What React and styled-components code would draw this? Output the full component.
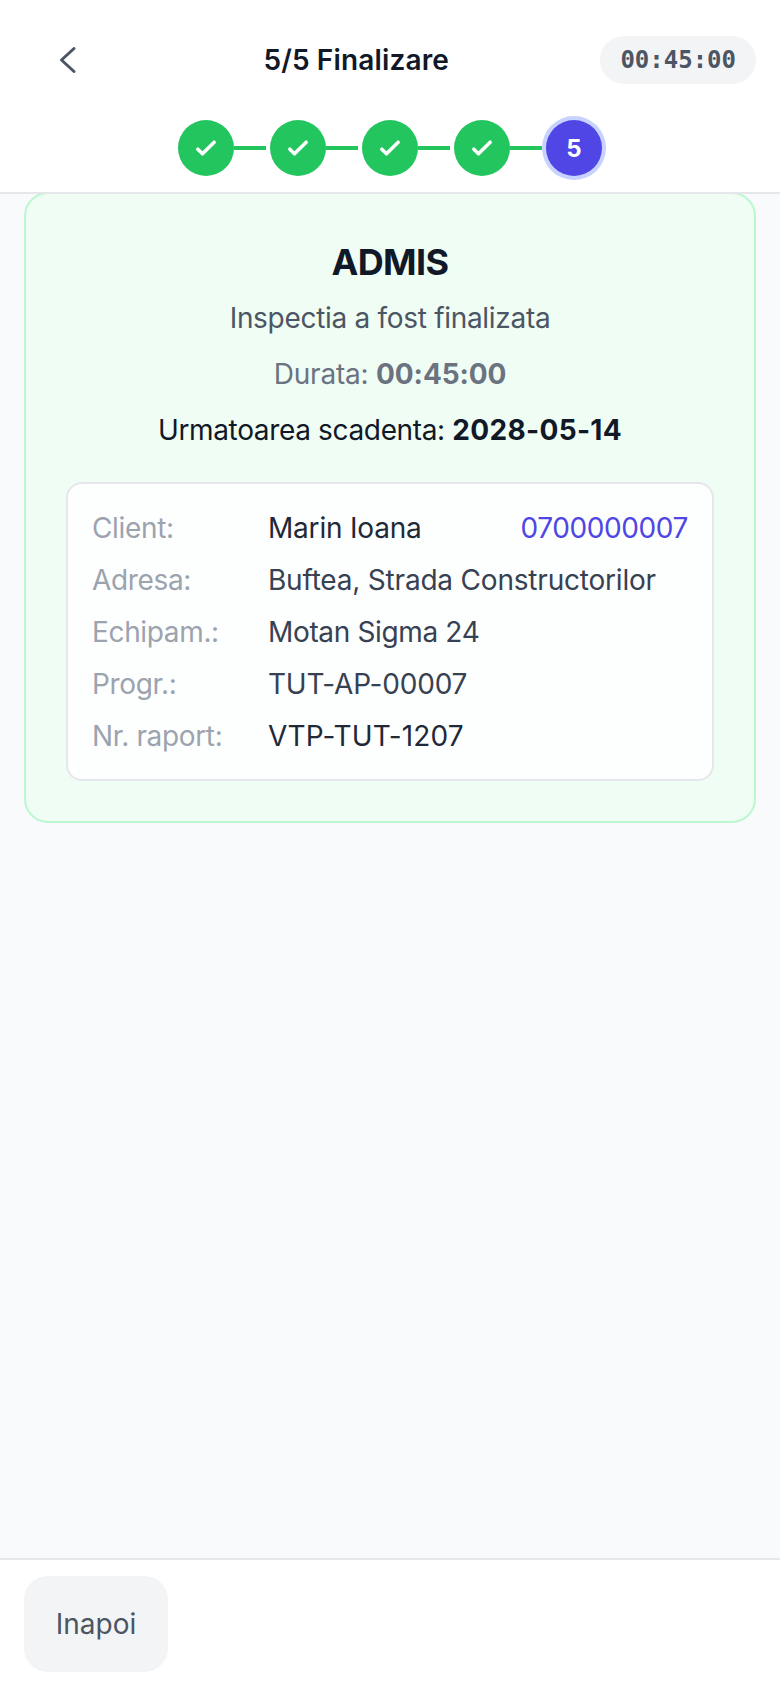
import React from 'react';
import styled, { createGlobalStyle } from 'styled-components';

const Global = createGlobalStyle`
  html, body { margin: 0; padding: 0; background: #f9fafb; }
  * { box-sizing: border-box; }
`;
const Page = styled.div`
  width: 780px; height: 1688px; display: flex; flex-direction: column;
  font-family: Inter, "Liberation Sans", sans-serif; background: #f9fafb; color: #111827;
`;
const Header = styled.header`
  background: #fff; border-bottom: 2px solid #e5e7eb; height: 194px; flex: none;
  display: flex; flex-direction: column;
`;
const TopBar = styled.div`
  height: 120px; padding: 0 24px; display: flex; justify-content: space-between; align-items: center;
`;
const Back = styled.button`
  width: 88px; height: 60px; padding: 0 0 0 32px; border: 0; background: none; color: #4b5563;
  display: flex; align-items: center;
`;
const Title = styled.h1`
  margin: 0; font-size: 28px; font-weight: 600; line-height: 36px; letter-spacing: 0.15px; color: #111827;
`;
const Timer = styled.div`
  height: 48px; padding: 0 20px; border-radius: 24px; background: #f3f4f6;
  display: flex; align-items: center; font-family: "DejaVu Sans Mono", monospace; font-weight: 700; font-size: 24px; color: #4b5563;
`;
const Steps = styled.div`
  display: flex; justify-content: center; align-items: center; height: 56px;
`;
const Dot = styled.div`
  width: 56px; height: 56px; border-radius: 50%; flex: none; display: flex; align-items: center; justify-content: center;
  color: #fff; background: ${p => p.$active ? '#4f46e5' : '#22c55e'}; font-size: 24px; font-weight: 700;
  box-shadow: ${p => p.$active ? '0 0 0 4px #c7d2fe' : 'none'};
`;
const Line = styled.div`
  width: 32px; height: 4px; margin-right: 4px; background: #22c55e; flex: none;
`;
const Main = styled.main`
  flex: 1; padding: 0 24px; overflow: hidden;
`;
const Card = styled.section`
  margin-top: -2px; background: #f0fdf4; border: 2px solid #bbf7d0; border-radius: 24px; padding: 48px 40px 40px;
  display: flex; flex-direction: column; align-items: center;
`;
const Verdict = styled.h2`
  margin: 0; font-size: 36px; line-height: 40px; font-weight: 700; color: #111827; letter-spacing: -0.6px;
`;
const Line1 = styled.p`
  margin: 16px 0 0; font-size: 28px; line-height: 40px; letter-spacing: ${p => p.$t || '-0.2px'}; color: ${p => p.$c || '#4b5563'};
  b { font-weight: 700; letter-spacing: ${p => p.$bt || '-0.1px'}; }
`;
const Info = styled.div`
  width: 100%; margin-top: 32px; background: rgba(255, 255, 255, 0.85); border: 2px solid #e5e7eb; border-radius: 16px;
  padding: 24px 24px 23px; display: flex; flex-direction: column; gap: 12px;
`;
const Row = styled.div`
  display: flex; font-size: 28px; line-height: 40px; letter-spacing: -0.2px; color: #374151;
`;
const Label = styled.span`
  width: 176px; flex: none; color: #9ca3af; letter-spacing: -0.35px;
`;
const Val = styled.span`
  flex: 1; color: ${p => p.$dark ? '#1f2937' : '#374151'}; letter-spacing: ${p => p.$t || '-0.2px'};
`;
const Phone = styled.span`
  color: #4f46e5; letter-spacing: -0.4px;
`;
const Footer = styled.footer`
  height: 130px; flex: none; background: #fff; border-top: 2px solid #e5e7eb; padding: 16px 24px;
`;
const BackBtn = styled.button`
  width: 144px; height: 96px; border: 0; border-radius: 24px; background: #f3f4f6; color: #4b5563;
  font-family: inherit; font-size: 28px;
`;
const Check = () => (
  <svg width="28" height="28" viewBox="0 0 24 24" fill="none" stroke="currentColor" strokeWidth="3" strokeLinecap="round" strokeLinejoin="round"><path d="M5 13l4 4L19 7" /></svg>
);
export default function App() {
  return (
    <Page>
      <Global />
      <Header>
        <TopBar>
          <Back aria-label="Inapoi">
            <svg width="24" height="36" viewBox="0 0 24 36" fill="none" stroke="currentColor" strokeWidth="3" strokeLinecap="round" strokeLinejoin="round"><path d="M18 6.5L5.5 18 18 29.5" /></svg>
          </Back>
          <Title>5/5 Finalizare</Title>
          <Timer>00:45:00</Timer>
        </TopBar>
        <Steps>
          {[0,1,2,3].map(i => (
            <React.Fragment key={i}><Dot><Check /></Dot><Line /></React.Fragment>
          ))}
          <Dot $active>5</Dot>
        </Steps>
      </Header>
      <Main>
        <Card>
          <Verdict>ADMIS</Verdict>
          <Line1 $t="-0.3px">Inspectia a fost finalizata</Line1>
          <Line1 $c="#6b7280">Durata: <b>00:45:00</b></Line1>
          <Line1 $c="#111827" $t="-0.35px" $bt="0.33px">Urmatoarea scadenta: <b>2028-05-14</b></Line1>
          <Info>
            <Row><Label>Client:</Label><Val $dark>Marin Ioana</Val><Phone>0700000007</Phone></Row>
            <Row><Label>Adresa:</Label><Val>Buftea, Strada Constructorilor</Val></Row>
            <Row><Label>Echipam.:</Label><Val $t="-0.35px">Motan Sigma 24</Val></Row>
            <Row><Label>Progr.:</Label><Val>TUT-AP-00007</Val></Row>
            <Row><Label>Nr. raport:</Label><Val $dark $t="0.15px">VTP-TUT-1207</Val></Row>
          </Info>
        </Card>
      </Main>
      <Footer><BackBtn>Inapoi</BackBtn></Footer>
    </Page>
  );
}
